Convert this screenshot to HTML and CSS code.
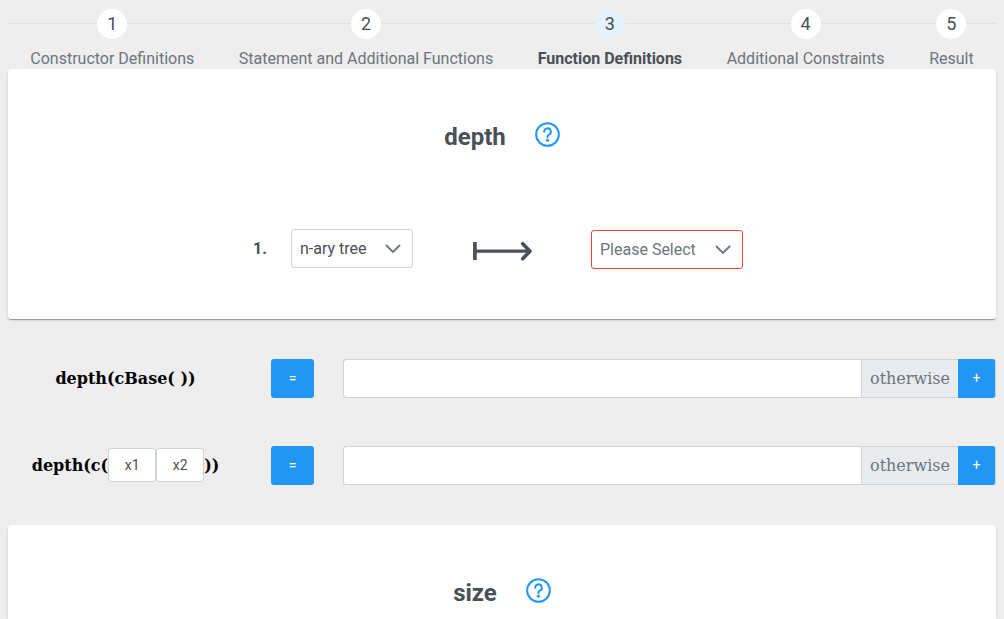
FILE: index.html
```html
<!DOCTYPE html>
<html lang="en">
<head>
<meta charset="utf-8">
<title>Function Definitions</title>
<link rel="stylesheet" href="styles.css">
</head>
<body>
<nav>
  <ol class="steps">
    <li class="step"><span class="step-number">1</span><span class="step-title">Constructor Definitions</span></li>
    <li class="step"><span class="step-number">2</span><span class="step-title">Statement and Additional Functions</span></li>
    <li class="step active"><span class="step-number">3</span><span class="step-title">Function Definitions</span></li>
    <li class="step"><span class="step-number">4</span><span class="step-title">Additional Constraints</span></li>
    <li class="step"><span class="step-number">5</span><span class="step-title">Result</span></li>
  </ol>
</nav>
<main>
  <section class="card">
    <header class="card-head">
      <h2 class="card-title">depth</h2>
      <svg class="help" viewBox="0 0 24 24"><circle cx="12" cy="12" r="10.900"/><path d="M8.800 9.400a3.200 3.200 0 1 1 4.600 2.800c-1 .5-1.400 1-1.400 1.800v.6"/><circle class="dot" cx="12" cy="17.500" r="1.500"/></svg>
    </header>
    <div class="signature">
      <span class="index">1.</span>
      <div class="dropdown source"><span>n-ary tree</span><svg class="chevron" viewBox="0 0 16 16"><path d="M1.500 4.500 8 11l6.500-6.500"/></svg></div>
      <svg class="mapsto" viewBox="0 0 60 20"><path class="bar" d="M2.900 1v18"/><path d="M3 10.200h54"/><path class="tip" d="m50.700 2.700 7.300 7.500-7.300 7.500"/></svg>
      <div class="dropdown target invalid"><span>Please Select</span><svg class="chevron" viewBox="0 0 16 16"><path d="M1.500 4.500 8 11l6.500-6.500"/></svg></div>
    </div>
  </section>
  <div class="rules">
    <div class="rule">
      <div class="term">depth(cBase( ))</div>
      <button class="button equals">=</button>
      <div class="input-group"><input class="input" type="text"><span class="addon">otherwise</span><button class="button plus">+</button></div>
    </div>
    <div class="rule">
      <div class="term">depth(c(<span class="variable">x1</span><span class="variable">x2</span>))</div>
      <button class="button equals">=</button>
      <div class="input-group"><input class="input" type="text"><span class="addon">otherwise</span><button class="button plus">+</button></div>
    </div>
  </div>
  <section class="card">
    <header class="card-head">
      <h2 class="card-title">size</h2>
      <svg class="help" viewBox="0 0 24 24"><circle cx="12" cy="12" r="10.900"/><path d="M8.800 9.400a3.200 3.200 0 1 1 4.600 2.800c-1 .5-1.400 1-1.400 1.800v.6"/><circle class="dot" cx="12" cy="17.500" r="1.500"/></svg>
    </header>
  </section>
</main>
</body>
</html>
```
FILE: styles.css
```css
* { box-sizing: border-box; }
html { height: 100%; overflow: hidden; }
body {
  height: 100%;
  margin: 0;
  padding: 0 8px;
  overflow: hidden;
  background: #eee;
  font-family: "DejaVu Serif", serif;
  font-size: 16px;
}
.steps {
  display: flex;
  height: 69px;
  margin: 0;
  padding: 9px 0 0;
  list-style: none;
  font-family: Roboto, sans-serif;
  background: linear-gradient(#dee2e6, #dee2e6) 0 23px / 100% 1px no-repeat;
}
.step {
  display: flex;
  flex: 1 1 auto;
  flex-direction: column;
  align-items: center;
  color: #6c757d;
}
.step-number {
  width: 30px;
  height: 30px;
  border-radius: 50%;
  background: #fff;
  color: #495057;
  font-size: 18px;
  line-height: 30px;
  text-align: center;
}
.step-title {
  z-index: 1;
  height: 21px;
  margin-top: 9px;
  background: #eee;
  line-height: 21px;
  white-space: nowrap;
}
.active .step-number { background: #e3f2fd; }
.active .step-title { color: #495057; font-weight: 700; }
.card {
  height: 250px;
  padding-top: 52px;
  border-radius: 3px;
  background: #fff;
  color: #495057;
  font-family: Roboto, sans-serif;
  box-shadow: 0 2px 1px -1px rgba(0,0,0,.2), 0 1px 1px rgba(0,0,0,.14), 0 1px 3px rgba(0,0,0,.12);
}
.rules + .card { height: 94px; border-radius: 3px 3px 0 0; }
.card-head { display: flex; justify-content: center; gap: 30px; height: 32px; padding-left: 1px; }
.card-title { margin: 0; font-size: 24px; line-height: 32px; }
.help { width: 25px; height: 25px; margin: 1px 1px 0 -1px; fill: none; stroke: #2196f3; stroke-width: 1.9; stroke-linecap: round; }
.help .dot { fill: #2196f3; stroke: none; }
.signature { display: flex; padding: 76px 0 0 245px; }
.index { width: 38px; padding-top: 9px; font-weight: 700; line-height: 21px; }
.dropdown {
  display: flex;
  align-items: center;
  justify-content: space-between;
  height: 39px;
  padding: 0 11px 0 8px;
  border: 1px solid #ced4da;
  border-radius: 3px;
  background: #fff;
}
.source { width: 122px; }
.target { width: 152px; margin-top: 1px; color: #6c757d; }
.invalid { border-color: #f44336; }
.chevron { width: 16px; height: 16px; fill: none; stroke: #6c757d; stroke-width: 1.8; stroke-linecap: round; }
.mapsto { width: 60px; height: 20px; margin: 12px 59px 0 59px; fill: none; stroke: #495057; stroke-width: 3.2; }
.mapsto .bar { stroke-width: 3.7; }
.mapsto .tip { stroke-width: 3.6; stroke-linecap: round; stroke-linejoin: round; }
.rules { padding: 40px 0; }
.rule { display: flex; height: 39px; }
.rule + .rule { margin-top: 48px; }
.term {
  display: flex;
  align-items: center;
  justify-content: center;
  width: 235px;
  margin-right: 28px;
  font-weight: 700;
  white-space: pre;
}
.variable {
  width: 48px;
  height: 34px;
  margin-bottom: 1px;
  border: 1px solid #ced4da;
  border-radius: 3px;
  background: #fff;
  color: #495057;
  font: 14px/32px Roboto, sans-serif;
  text-align: center;
}
.button {
  padding: 0;
  border: 0;
  border-radius: 3px;
  background: #2196f3;
  color: #fff;
  font: 14px/39px Roboto, sans-serif;
}
.equals { width: 43px; margin-right: 29px; }
.input-group { display: flex; width: 653px; }
.input { flex: 1; min-width: 0; border: 1px solid #ced4da; border-right: 0; border-radius: 3px 0 0 3px; background: #fff; }
.addon {
  width: 97px;
  border: 1px solid #ced4da;
  border-right: 0;
  background: #e9ecef;
  color: #6c757d;
  line-height: 37px;
  text-align: center;
}
.plus { width: 38px; border-right: 1px solid #ced4da; border-radius: 0 3px 3px 0; }
```
